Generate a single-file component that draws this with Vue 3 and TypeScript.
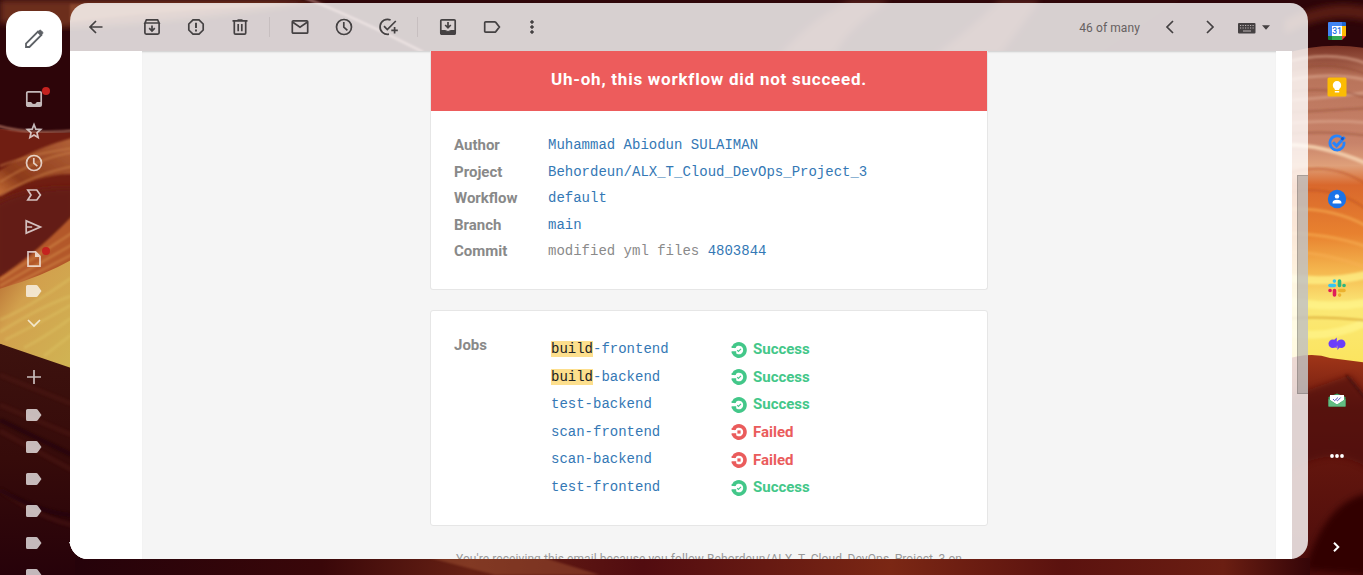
<script setup lang="ts">
interface Detail { label: string; text?: string; link: string }
interface Job { mark?: string; name: string; ok: boolean }

const details: Detail[] = [
  { label: 'Author', link: 'Muhammad Abiodun SULAIMAN' },
  { label: 'Project', link: 'Behordeun/ALX_T_Cloud_DevOps_Project_3' },
  { label: 'Workflow', link: 'default' },
  { label: 'Branch', link: 'main' },
  { label: 'Commit', text: 'modified yml files ', link: '4803844' },
]

const jobs: Job[] = [
  { mark: 'build', name: '-frontend', ok: true },
  { mark: 'build', name: '-backend', ok: true },
  { name: 'test-backend', ok: true },
  { name: 'scan-frontend', ok: false },
  { name: 'scan-backend', ok: false },
  { name: 'test-frontend', ok: true },
]
const folders = [1, 2, 3, 4, 5, 6]
</script>

<template>
  <div class="app">
    <svg class="wallpaper" viewBox="0 0 1363 575" preserveAspectRatio="none">
      <defs>
        <linearGradient id="yl" x1="0" y1="0" x2="1" y2="1">
          <stop offset="0" stop-color="#b0602c" /><stop offset=".35" stop-color="#d2a04d" /><stop offset="1" stop-color="#d0b654" />
        </linearGradient>
        <linearGradient id="sw" x1="0" y1="1" x2="1" y2="0">
          <stop offset="0" stop-color="#d0793c" /><stop offset=".3" stop-color="#8c3a1b" /><stop offset="1" stop-color="#b5653a" />
        </linearGradient>
        <linearGradient id="rt" x1="0" y1="0" x2="0" y2="1">
          <stop offset="0" stop-color="#7a3426" /><stop offset=".1" stop-color="#b9745b" />
          <stop offset=".3" stop-color="#c8836a" /><stop offset=".37" stop-color="#dfa07a" />
          <stop offset=".43" stop-color="#d9682c" /><stop offset=".58" stop-color="#e8812f" />
          <stop offset=".7" stop-color="#f5b950" /><stop offset=".8" stop-color="#fbe876" /><stop offset="1" stop-color="#fbe45c" />
        </linearGradient>
        <linearGradient id="dn" x1="0" y1="0" x2="0" y2="1">
          <stop offset="0" stop-color="#a03518" /><stop offset=".25" stop-color="#6c1a0f" /><stop offset="1" stop-color="#4c0c0b" />
        </linearGradient>
        <linearGradient id="bt" x1="0" x2="1">
          <stop offset="0" stop-color="#25020a" /><stop offset=".2" stop-color="#3a0709" /><stop offset=".32" stop-color="#672114" />
          <stop offset=".46" stop-color="#520c10" /><stop offset=".66" stop-color="#7b2714" /><stop offset=".8" stop-color="#5b120f" />
          <stop offset=".93" stop-color="#6b1e12" /><stop offset="1" stop-color="#350508" />
        </linearGradient>
        <linearGradient id="dk" x1="0" y1="0" x2="0" y2="1">
          <stop offset="0" stop-color="#3d120e" /><stop offset=".5" stop-color="#360b0a" /><stop offset="1" stop-color="#27020a" />
        </linearGradient>
        <filter id="soft"><feGaussianBlur stdDeviation="3" /></filter>
        <filter id="fine"><feGaussianBlur stdDeviation="1" /></filter>
      </defs>
      <rect width="1363" height="575" fill="#2d0509" />
      <path d="M0 0H330Q150 26 40 28Q15 20 0 24Z" fill="#6c2d1c" filter="url(#soft)" />
      <path d="M70 22Q180 8 320 4H70Z" fill="#9a5236" opacity=".6" filter="url(#fine)" />
      <path d="M300 0Q370 14 423 53H1100L1180 0Z" fill="#32090c" opacity=".5" />
      <path d="M305-2Q350 15 423 52" fill="none" stroke="#a97671" stroke-width="2" filter="url(#fine)" />
      <path d="M780 55Q810 20 850 0H890Q845 30 835 55ZM935 55Q970 30 1000 0H1040L1000 55Z" fill="#8e4a37" opacity=".4" filter="url(#soft)" />
      <!-- left canyon wall -->
      <path d="M-5 128Q30 134 80 132V300H-5Z" fill="#701e12" />
      <path d="M-5 125Q30 136 80 130" fill="none" stroke="#a86a58" stroke-width="2" filter="url(#fine)" />
      <path d="M-5 174Q30 148 80 136V175Q45 170 -5 198Z" fill="url(#sw)" filter="url(#fine)" />
      <path d="M0 166Q30 154 75 148M0 182Q40 157 75 152M0 196Q35 173 75 166" fill="none" stroke="#d0884d" stroke-width="2" opacity=".5" filter="url(#fine)" />
      <path d="M-5 204Q30 186 75 188V232Q30 268-5 280Z" fill="#641b13" filter="url(#soft)" />
      <path d="M-5 280Q35 255 75 213V265Q40 284 -5 300Z" fill="#b3592a" filter="url(#fine)" />
      <path d="M0 280L75 231M0 286L75 243M0 292L75 253" stroke="#d7914b" stroke-width="2.5" opacity=".5" filter="url(#fine)" />
      <path d="M-5 290Q40 278 75 258V375L-5 342Z" fill="url(#yl)" />
      <path d="M0 320Q30 307 71 278M0 332Q42 306 71 296M5 340Q45 320 71 305M24 348Q47 336 71 318M44 356L71 335" fill="none" stroke="#e1c967" stroke-width="3" opacity=".35" filter="url(#fine)" />
      <path d="M-5 342L80 371V575H-5Z" fill="url(#dk)" />
      <path d="M0 375L72 404M0 405L72 435M0 431L72 470M0 490Q40 518 72 525" stroke="#551b14" stroke-width="5" fill="none" opacity=".35" filter="url(#fine)" />
      <path d="M0 420L72 455M0 490Q44 514 72 515" stroke="#230408" stroke-width="5" fill="none" opacity=".6" filter="url(#fine)" />
      <!-- right canyon wall -->
      <path d="M1280 55Q1325 40 1370 49V370H1280Z" fill="url(#rt)" />
      <path d="M1285 20Q1330-3 1370 8V22Q1330 10 1285 34Z" fill="#632117" opacity=".8" filter="url(#soft)" />
      <g fill="none" filter="url(#fine)">
        <path d="M1280 64Q1330 48 1370 65M1280 82Q1330 70 1370 81M1280 101Q1330 98 1370 92M1280 124Q1330 119 1370 123" stroke="#dfaa91" stroke-width="3" opacity=".55" />
        <path d="M1280 73Q1330 57 1370 76M1280 93Q1330 85 1370 99M1280 113Q1330 110 1370 108M1280 134Q1330 130 1370 136" stroke="#853c2a" stroke-width="2" opacity=".4" />
        <path d="M1280 145Q1320 143 1370 165" stroke="#f1c9a7" stroke-width="4" />
        <path d="M1280 176Q1330 157 1370 187M1280 195Q1330 180 1370 212" stroke="#b84b1d" stroke-width="2" opacity=".5" />
        <path d="M1280 210Q1330 205 1370 228M1280 233Q1330 233 1370 248M1280 252Q1320 250 1370 269" stroke="#f7b054" stroke-width="3" opacity=".55" />
        <path d="M1280 277Q1325 285 1370 274M1280 300Q1330 310 1370 302M1280 331Q1330 342 1370 320" stroke="#fff58a" stroke-width="8" opacity=".7" />
        <path d="M1280 319Q1320 315 1370 321" stroke="#dfb341" stroke-width="2" />
      </g>
      <path d="M1280 361Q1310 351 1330 358L1370 363V575H1280Z" fill="url(#dn)" />
      <path d="M1280 400L1350 375L1370 400V470Q1330 440 1280 478Z" fill="#4a0b0b" opacity=".6" filter="url(#soft)" />
      <path d="M1346 375L1368 402" fill="none" stroke="#2e0809" stroke-width="2" opacity=".5" filter="url(#fine)" />
      <path d="M1305 570Q1325 500 1370 493V575Z" fill="#300306" filter="url(#soft)" />
      <path d="M75 558H1310V575H75Z" fill="url(#bt)" />
      <path d="M430 558H545L600 575H495Z" fill="#9d5132" opacity=".5" filter="url(#fine)" />
      <path d="M69 542l3 0v7z" fill="#fff" />
    </svg>

    <nav class="rail">
      <button class="compose">
        <svg width="24" height="24" viewBox="0 0 24 24" fill="none" stroke="#5d6166" stroke-width="1.8"><path d="M4 20v-3.4L16 4.6l3.4 3.4L7.4 20z" /><path d="M15.6 5.2l1.8-1.8q.8-.6 1.6.1l1.5 1.5q.7.8.1 1.6l-1.8 1.8z" fill="#5d6166" stroke-width="1" /></svg>
      </button>
      <div class="item"><svg class="ic" viewBox="0 0 20 20"><rect x="2.8" y="2.8" width="14.4" height="14.4" rx="1.2" /><path class="fill" d="M3 13h4.2a3 3 0 0 0 5.6 0H17v4H3z" /></svg><i class="dot"></i></div>
      <div class="item"><svg class="ic" viewBox="0 0 20 20"><path d="M10 3.6l1.8 4.5 4.9.4-3.7 3.2 1.1 4.8L10 14l-4.1 2.5L7 11.7 3.3 8.5l4.9-.4z" /></svg></div>
      <div class="item"><svg class="ic" viewBox="0 0 20 20"><circle cx="10" cy="10" r="7.5" /><path d="M9.8 5v5.2l3.6 3" /></svg></div>
      <div class="item"><svg class="ic" viewBox="0 0 20 20"><path d="M3.8 5h9L16.4 10l-3.6 5h-9L7 10z" /></svg></div>
      <div class="item"><svg class="ic" viewBox="0 0 20 20"><path d="M2.2 3.9L16.4 10 2.2 16.1zM2.2 10h6" /></svg></div>
      <div class="item"><svg class="ic" viewBox="0 0 20 20"><path d="M4 2.8h7.5L16 7.3v9.9H4z" /><path class="fill" d="M11 2.8L16 8h-5z" /></svg><i class="dot"></i></div>
      <div class="item"><svg class="ic" viewBox="0 0 20 20"><path class="fill" d="M3.5 4h8.7q1 0 1.5.8L17.5 10l-3.8 5.2q-.5.8-1.5.8H3.5Q2 16 2 14.5v-9Q2 4 3.5 4z" /></svg></div>
      <div class="item"><svg class="ic" viewBox="0 0 20 20"><path d="M4 7l6 6 6-6" /></svg></div>
      <div class="item add"><svg class="ic" viewBox="0 0 20 20"><path d="M10 3v14M3 10h14" /></svg></div>
      <div v-for="n in folders" :key="n" class="item"><svg class="ic" viewBox="0 0 20 20"><path class="fill" d="M3.5 4h8.7q1 0 1.5.8L17.5 10l-3.8 5.2q-.5.8-1.5.8H3.5Q2 16 2 14.5v-9Q2 4 3.5 4z" /></svg></div>
    </nav>

    <main class="panel">
      <header class="toolbar">
        <span class="btn back"><svg viewBox="0 0 20 20"><path d="M16.5 10H4M10 4l-6 6 6 6" /></svg></span>
        <span class="btn"><svg viewBox="0 0 20 20"><path d="M2.9 6v9.8q0 1.3 1.3 1.3h11.6q1.3 0 1.3-1.3V6M2.9 6l1.5-3.1h11.2L17.1 6zM10 8.5v5M7.2 11.2l2.8 2.8 2.8-2.8" /></svg></span>
        <span class="btn"><svg viewBox="0 0 20 20"><path d="M7 2.8h6L17.2 7v6L13 17.2H7L2.8 13V7z" /><path d="M10 5.7v5.2M10 12.5v2" stroke-width="1.9" /></svg></span>
        <span class="btn"><svg viewBox="0 0 20 20"><path d="M4.3 4v11.9q0 1.2 1.2 1.2h9q1.2 0 1.2-1.2V4M2.5 3.8h15M7.5 3h5M8.2 7v7.2M11.8 7v7.2" /></svg></span>
        <i class="sep"></i>
        <span class="btn"><svg viewBox="0 0 20 20"><rect x="2.3" y="3.8" width="15.4" height="12.4" rx="1" /><path d="M2.5 5l7.5 5.3L17.5 5" /></svg></span>
        <span class="btn"><svg viewBox="0 0 20 20"><circle cx="10" cy="10" r="7.5" /><path d="M9.8 5v5.2l3.6 3.2" /></svg></span>
        <span class="btn"><svg viewBox="0 0 20 20"><path d="M12.6 3A7.5 7.5 0 1 0 11 17.2M6 9.2l3.3 3.3L17.8 4M16.6 10v6.6M13.3 13.3h6.5" /></svg></span>
        <i class="sep"></i>
        <span class="btn"><svg viewBox="0 0 20 20"><rect x="2.8" y="2.8" width="14.4" height="14.4" rx="1" /><path class="solid" d="M3 13.5h4.2q2.8 2 5.6 0H17V17H3z" /><path d="M10 5v5.5M7.2 8l2.8 2.8L12.8 8" /></svg></span>
        <span class="btn"><svg viewBox="0 0 20 20"><path d="M3.7 4.8h8.8q.8 0 1.3.6l3.6 4.6-3.6 4.6q-.5.6-1.3.6H3.7q-1 0-1-1V5.8q0-1 1-1z" /></svg></span>
        <span class="btn more"><svg viewBox="0 0 20 20"><g class="solid"><circle cx="10" cy="5" r="1.3" /><circle cx="10" cy="10" r="1.3" /><circle cx="10" cy="15" r="1.3" /></g></svg></span>
        <span class="count">46 of many</span>
        <span class="btn nav"><svg viewBox="0 0 20 20"><path d="M13 4l-6 6 6 6" /></svg></span>
        <span class="btn nav"><svg viewBox="0 0 20 20"><path d="M7 4l6 6-6 6" /></svg></span>
        <svg class="keys" width="34" height="20" viewBox="0 0 34 20"><rect x="2" y="6" width="17.5" height="10.5" rx="1" fill="#454142" /><path d="M4 8.5h14M4 11h14" stroke="#bdb5b5" stroke-width="1.1" stroke-dasharray="1.2 1.3" /><path d="M7 14h8" stroke="#bdb5b5" stroke-width="1.1" /><path d="M26 8.2h8l-4 4.6z" fill="#454142" /></svg>
      </header>

      <div class="viewport">
        <div class="mail">
          <section class="card first">
            <h1>Uh-oh, this workflow did not succeed.</h1>
            <dl>
              <div v-for="d in details" :key="d.label" class="row">
                <dt>{{ d.label }}</dt>
                <dd>{{ d.text }}<a>{{ d.link }}</a></dd>
              </div>
            </dl>
          </section>
          <section class="card jobs">
            <h2>Jobs</h2>
            <div class="list">
              <div v-for="(j, i) in jobs" :key="i" class="job">
                <a><mark v-if="j.mark">{{ j.mark }}</mark>{{ j.name }}</a>
                <span class="status" :class="{ failed: !j.ok }">
                  <svg width="16" height="16" viewBox="0 0 16 16" fill="none" stroke="currentColor">
                    <path d="M2.3 5.6A6.1 6.1 0 1 1 2.3 10.4" stroke-width="3.6" />
                    <path d="M.6 5.2h4.2M.6 10.2h4.6" stroke-width="1.7" />
                    <path v-if="j.ok" d="M6.2 8.2l1.2 1.2 2.6-2.6" stroke-width="1.2" />
                    <rect v-else x="6.4" y="6.4" width="3.2" height="3.2" fill="currentColor" stroke="none" />
                  </svg>
                  <b>{{ j.ok ? 'Success' : 'Failed' }}</b>
                </span>
              </div>
            </div>
          </section>
          <p class="note">You're receiving this email because you follow Behordeun/ALX_T_Cloud_DevOps_Project_3 on</p>
        </div>
        <div class="track"><div class="thumb"></div></div>
      </div>
    </main>

    <aside class="addons">
      <svg viewBox="0 0 20 20"><path d="M1 2q0-1 1-1h14v4H5v11H1z" fill="#4285f4" /><path d="M15 1h3q1 0 1 1v3h-4z" fill="#1967d2" /><path d="M15 5h4v10h-4z" fill="#fbbc04" /><path d="M5 15h10v4H5z" fill="#34a853" /><path d="M1 15h4v4H2q-1 0-1-1z" fill="#188038" /><path d="M15 15h4l-4 4z" fill="#ea4335" /><path d="M5 5h10v10H5z" fill="#fff" /><text x="10" y="13.3" text-anchor="middle" font-family="Roboto, sans-serif" font-size="8.5" font-weight="500" fill="#1a73e8">31</text></svg>
      <svg viewBox="0 0 20 20"><rect x=".5" y=".5" width="19" height="19" rx="1.5" fill="#fbbc04" /><path d="M7.8 13v-1.1a4.2 4.2 0 1 1 4.4 0V13zM7.8 14h4.4v1.6H7.8z" fill="#fff" /></svg>
      <svg viewBox="0 0 20 20" fill="none"><path d="M14.3 4.3A7.1 7.1 0 1 0 17 8.8" stroke="#2684fc" stroke-width="2.7" /><path d="M6 9.3l3.6 3.6L17.7 4" stroke="#2684fc" stroke-width="3" /><circle cx="15.4" cy="5.6" r="1.6" fill="#0b57d0" /></svg>
      <svg viewBox="0 0 20 20"><circle cx="10" cy="10" r="9.2" fill="#1a73e8" /><circle cx="10" cy="7.4" r="2.2" fill="#fff" /><path d="M5.6 14.5v-1q.2-2.8 4.4-2.8t4.4 2.8v1z" fill="#fff" /></svg>
      <svg class="slack" viewBox="0 0 20 20" stroke-width="3.6" stroke-linecap="round"><path d="M3 7.5h4.3" stroke="#36c5f0" /><path d="M7.4 3v.1" stroke="#36c5f0" /><path d="M12.5 3v4.4M17 7.5h.1" stroke="#2eb67d" /><path d="M12.6 12.5H17M12.6 17v.1" stroke="#ecb22e" /><path d="M7.5 12.6V17M3 12.5h.1" stroke="#e01e5a" /></svg>
      <svg viewBox="0 0 20 20"><circle cx="5.8" cy="9.8" r="4.3" fill="#6b3dfa" /><circle cx="14.2" cy="9.8" r="4.3" fill="#6b3dfa" /><path d="M7 6l2.8-2.5V14L7 13zM13 6l-2.6 1v9l2.6-3z" fill="#6b3dfa" /></svg>
      <svg viewBox="0 0 20 20"><path d="M1.5 7L10 3.5 18.5 7v9.5h-17z" fill="#3fa668" /><path d="M3 5h14v5l-7 4.5L3 10z" fill="#fff" /><path d="M1.5 9l8.5 6 8.5-6v7.5h-17z" fill="#62bd82" /><path d="M6 9l1.6 1.7L11 7.5M9.5 10l1 .8 3.2-3.3" stroke="#5b5bc2" fill="none" /></svg>
      <svg viewBox="0 0 20 20" fill="#fff"><circle cx="5" cy="10" r="1.9" /><circle cx="10" cy="10" r="1.9" /><circle cx="15" cy="10" r="1.9" /></svg>
      <svg class="expand" viewBox="0 0 20 20" fill="none" stroke="#fff" stroke-width="2"><path d="M7 5.7l4.3 4.3L7 14.3" /></svg>
    </aside>
  </div>
</template>

<style>
body { margin: 0; overflow: hidden; background: #2d0509; }
</style>

<style scoped>
.app { position: relative; display: grid; grid-template-columns: 70px 1238px 55px; width: 1363px; height: 575px; overflow: hidden; font-family: Roboto, "Liberation Sans", sans-serif; }
.wallpaper { position: absolute; inset: 0; width: 100%; height: 100%; }
.rail { position: relative; height: 575px; overflow: hidden; display: flex; flex-direction: column; }
.compose { flex: none; margin: 11px 0 16px 6px; width: 56px; height: 56px; padding: 0; border: 0; border-radius: 16px; background: #fff; display: grid; place-items: center; }
.item { position: relative; flex: none; height: 32px; display: flex; align-items: center; padding-left: 24px; }
.ic { width: 20px; height: 20px; fill: none; stroke: #fff; stroke-width: 1.7; opacity: .72; }
.ic .fill { fill: #fff; stroke: none; }
.add { margin: 22px 0 6px; }
.dot { position: absolute; left: 42px; top: 4px; width: 8px; height: 8px; border-radius: 50%; background: #c5221f; }
.panel { position: relative; margin-top: 3px; height: 556px; border-radius: 18px; overflow: hidden; background: rgba(255, 255, 255, .81); }
.toolbar { position: relative; z-index: 1; height: 48px; box-sizing: border-box; padding: 0 38px 0 4px; display: flex; align-items: center; }
.btn { width: 44px; display: flex; justify-content: center; }
.btn svg { width: 20px; height: 20px; fill: none; stroke: #444142; stroke-width: 1.7; }
.btn .solid { fill: #444142; stroke-width: 1; }
.back { margin-right: 12px; }
.more { width: 36px; }
.nav { width: 40px; }
.sep { width: 1px; height: 20px; margin: 0 8px 0 7px; background: #c7bfc0; }
.count { margin-left: auto; margin-right: 10px; font-size: 12px; line-height: 16px; padding-top: 1px; letter-spacing: .1px; color: #666061; }
.keys { margin-left: 6px; }
.viewport { display: flex; height: 508px; }
.mail { width: 1134px; height: 508px; overflow: hidden; border-left: 72px solid #fff; border-right: 16px solid #fff; background: #f5f5f5; box-shadow: inset 0 2px 2px -1px #ccc; }
.track { width: 16px; padding-top: 124px; box-sizing: border-box; }
.thumb { margin-left: 5px; height: 219px; box-sizing: border-box; border: 1px solid rgba(0, 0, 0, .15); border-right: 0; background: rgba(70, 70, 70, .28); }
.card { box-sizing: border-box; width: 558px; margin-left: 288px; border: 1px solid #e6e6e6; border-radius: 3px; background: #fff; }
.first { height: 239px; border-top: 0; border-radius: 0 0 3px 3px; }
h1 { margin: 0; height: 60px; line-height: 56px; text-align: center; background: #ed5c5c; color: #fff; font-size: 17px; font-weight: 700; letter-spacing: .76px; }
dl { margin: 0; padding: 21px 0 0 23px; }
.row { display: flex; height: 26.5px; line-height: 26.5px; }
dt { width: 94px; color: #898989; font-size: 15px; font-weight: 700; }
dd, .job a { margin: 0; font: 14px/26.5px "Liberation Mono", monospace; color: #8a8a8a; white-space: pre; }
a { color: #3478b5; }
.jobs { height: 216px; margin-top: 20px; display: flex; padding: 24px 0 0 23px; }
h2 { width: 97px; margin: 0; color: #898989; font-size: 15px; line-height: 20px; font-weight: 700; }
.list { padding-top: .4px; }
.job { height: 27.6px; display: flex; align-items: center; }
.job a { width: 180px; color: #3478b5; }
mark { background: #fddf8d; color: #202124; }
.status { display: flex; align-items: center; gap: 6px; color: #43c789; }
.status svg { margin-top: 1px; }
.status b { font-size: 15px; line-height: 20px; font-weight: 700; }
.failed { color: #ea5c5c; }
.note { margin: 25px 0 0 314px; font-size: 12px; line-height: 16px; letter-spacing: .08px; color: #999; white-space: nowrap; }
.addons { position: relative; display: flex; flex-direction: column; align-items: center; gap: 36px; padding: 21px 0 0 3px; }
.addons svg { width: 20px; height: 20px; flex: none; }
.addons .slack { margin-top: 33px; }
.addons .expand { margin-top: 35px; }
</style>
